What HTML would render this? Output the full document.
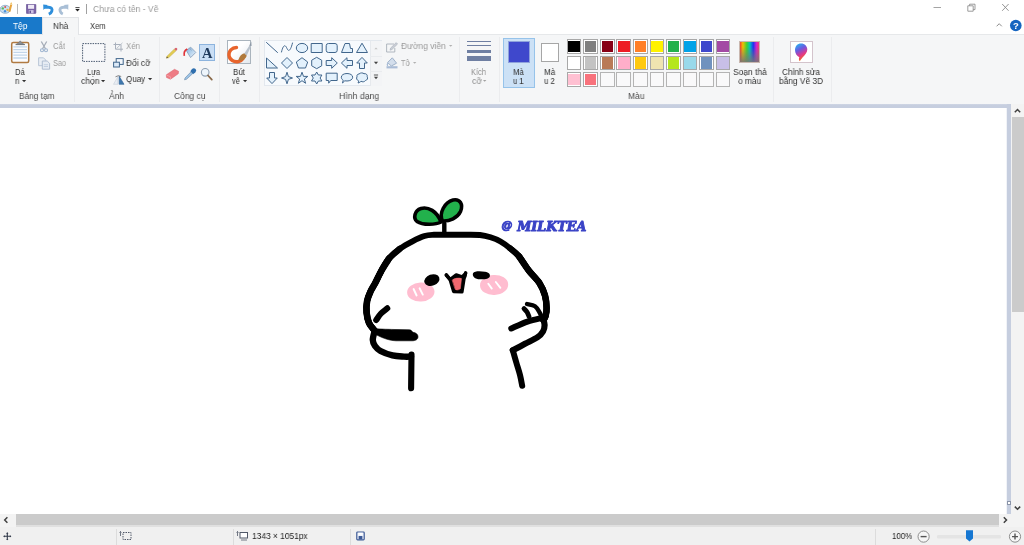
<!DOCTYPE html>
<html lang="vi">
<head>
<meta charset="utf-8">
<title>Chưa có tên - Vẽ</title>
<style>
*{box-sizing:border-box;margin:0;padding:0}
html,body{width:1024px;height:545px;overflow:hidden;background:#fff}
body{font-family:"Liberation Sans",sans-serif;font-size:9px;color:#444;position:relative}
.abs{position:absolute}
svg{overflow:visible;will-change:transform}
.t{position:absolute;white-space:nowrap;line-height:12px;height:12px;transform-origin:0 50%;will-change:transform}
#titlebar{position:absolute;left:0;top:0;width:1024px;height:17px;background:#fff}
#tabs{position:absolute;left:0;top:17px;width:1024px;height:17px;background:#fff}
#ribbon{position:absolute;left:0;top:34px;width:1024px;height:70px;background:#f5f6f7;border-top:1px solid #e6e8ea}
#band{position:absolute;left:0;top:103.8px;width:1011px;height:4.2px;background:linear-gradient(#cfd6e4,#c6cedf 40%)}
#canvas{position:absolute;left:0;top:108px;width:1007px;height:406px;background:#fff}
.sep{position:absolute;top:37px;width:1px;height:65px;background:#ebecee}
.pc{position:absolute;width:14.6px;height:14.6px;border:0.8px solid #a8a8a8;background:#fff}
.pc i{position:absolute;left:0.55px;top:0.55px;right:0.55px;bottom:0.55px;display:block}
.pe{position:absolute;width:14.6px;height:14.6px;border:0.8px solid #b4b4b4;background:#f9f9fa}
</style>
</head>
<body>
<div id="titlebar"></div>
<div id="tabs"></div>
<div id="ribbon"></div>
<div id="band"></div>
<div id="canvas"></div>

<!-- quick access toolbar -->
<svg class="abs" style="left:0;top:1px" width="14" height="14" viewBox="0 0 14 14">
<ellipse cx="5.2" cy="8.3" rx="5.2" ry="4" fill="#c9dff2" stroke="#8aa6c4" stroke-width="0.8"/>
<circle cx="2.8" cy="7.4" r="1.2" fill="#5cb85c"/><circle cx="5" cy="10.3" r="1.2" fill="#4a90d9"/><circle cx="7.4" cy="8.8" r="1.1" fill="#e8b23c"/><circle cx="5.2" cy="6" r="1" fill="#d9534f"/>
<path d="M8.3 10.500 L10.200 3.500 L12.200 4 L10.300 11 Z" fill="#e8a33c"/><path d="M10 3.200 L11.200 1 L12.500 3.800 Z" fill="#f0c060"/>
</svg>
<div class="abs" style="left:17px;top:4px;width:1px;height:10px;background:#b8b8b8"></div>
<svg class="abs" style="left:25.600px;top:4.200px" width="10.200" height="9.700" viewBox="0 0 11 10.500">
<rect x="0.300" y="0.300" width="10.400" height="9.900" rx="0.600" fill="#7a62a6" stroke="#5e4a8c" stroke-width="0.600"/>
<rect x="2.200" y="0.900" width="6.600" height="4.300" fill="#efeaf6"/>
<rect x="3" y="6.600" width="5.200" height="3.600" fill="#cfc4e4"/><rect x="3.800" y="7.200" width="1.500" height="2.600" fill="#5e4a8c"/>
</svg>
<svg class="abs" style="left:43px;top:3.500px" width="11" height="11" viewBox="0 0 11 11">
<path d="M1 3.200 H5.500 C8.500 3.200 9.600 5.200 8.800 7.200 C8.300 8.600 7.200 9.600 5.800 10.200" fill="none" stroke="#2f8fdb" stroke-width="2.900"/>
<path d="M0.200 0.500 L4.800 0.900 L0.400 5.900 Z" fill="#2f8fdb"/>
</svg>
<svg class="abs" style="left:57.800px;top:3.500px" width="11" height="11" viewBox="0 0 11 11">
<path d="M9.500 3.200 H5.500 C2.500 3.200 1.400 5.200 2.200 7.200 C2.700 8.600 3.500 9.400 4.800 10" fill="none" stroke="#a9bfd6" stroke-width="2.900"/>
<path d="M10.400 0.500 L5.800 0.900 L10.200 5.900 Z" fill="#a9bfd6"/>
</svg>
<svg class="abs" style="left:75px;top:6.800px" width="5" height="5.200" viewBox="0 0 6 6"><path d="M0.500 0.600 H5.500" stroke="#222" stroke-width="1"/><path d="M0.300 2.400 H5.700 L3 5.300 Z" fill="#222"/></svg>
<div class="abs" style="left:86px;top:4px;width:1px;height:10px;background:#a0a0a0"></div>
<!-- window buttons -->
<svg class="abs" style="left:928px;top:0" width="96" height="17" viewBox="0 0 96 17">
<path d="M5.500 7.500 H13" stroke="#9a9a9a" stroke-width="0.900" fill="none"/>
<path d="M39.800 5.800 H45.200 V11.200 H39.800 Z M41.600 5.800 V4.200 H47 V9.600 H45.200" stroke="#8a8a8a" stroke-width="0.850" fill="none"/>
<path d="M74.200 4 L80.600 10.800 M80.600 4 L74.200 10.800" stroke="#8a8a8a" stroke-width="0.900" fill="none"/>
</svg>
<svg class="abs" style="left:994px;top:18px" width="30" height="15" viewBox="0 0 30 15">
<path d="M2.600 8.300 L5.200 5.700 L7.800 8.300" stroke="#8a8a8a" stroke-width="1" fill="none"/>
<circle cx="21.800" cy="7.500" r="5.800" fill="#1565c0"/>
<text x="21.800" y="10.800" font-family="'Liberation Sans',sans-serif" font-weight="bold" font-size="9.500" fill="#fff" text-anchor="middle">?</text>
</svg>
<!-- tabs -->
<div class="abs" style="left:0;top:17px;width:42px;height:17px;background:#1979ca"></div>
<div class="abs" style="left:42px;top:17px;width:37px;height:18px;background:#f5f6f7;border:1px solid #e2e4e7;border-bottom:none"></div>

<!-- group separators -->
<div class="sep" style="left:74px"></div>
<div class="sep" style="left:159px"></div>
<div class="sep" style="left:219px"></div>
<div class="sep" style="left:259px"></div>
<div class="sep" style="left:459px"></div>
<div class="sep" style="left:499px"></div>
<div class="sep" style="left:773px"></div>
<div class="sep" style="left:831px"></div>
<!-- paste -->
<svg class="abs" style="left:10px;top:39px" width="21" height="25" viewBox="0 0 21 25">
<rect x="1.700" y="3.400" width="17" height="20.200" rx="1.500" fill="#fbfcfe" stroke="#b07a42" stroke-width="1.500"/>
<path d="M3.400 7.800 H17 M3.400 10.600 H17 M3.400 13.400 H17 M3.400 16.200 H17 M3.400 19 H17" stroke="#c3d6ea" stroke-width="1.300"/>
<path d="M6 5.400 L8.500 3.800 L10.200 1.800 L11.900 3.800 L14.400 5.400 Z" fill="#8a8f96" stroke="#6a7078" stroke-width="0.500"/>
<path d="M5.500 5.600 H15" stroke="#6a7078" stroke-width="0.900"/>
</svg>
<!-- cut -->
<svg class="abs" style="left:40px;top:40.500px" width="8" height="12" viewBox="0 0 8 12">
<path d="M1.300 0.500 L5.600 8 M6.700 0.500 L2.400 8" stroke="#a6adb8" stroke-width="1.300" fill="none"/>
<circle cx="2" cy="9.200" r="1.500" fill="none" stroke="#9fb5d0" stroke-width="1.100"/><circle cx="6" cy="9.200" r="1.500" fill="none" stroke="#9fb5d0" stroke-width="1.100"/>
</svg>
<!-- copy -->
<svg class="abs" style="left:38px;top:56.500px" width="13" height="13" viewBox="0 0 13 13">
<path d="M0.600 0.800 H5.500 L7.800 3.100 V8.700 H0.600 Z" fill="#e9eef5" stroke="#b4c2d4" stroke-width="0.900"/>
<path d="M4.300 4 H9.200 L11.600 6.400 V12.200 H4.300 Z" fill="#e6ecf4" stroke="#a9b9cd" stroke-width="0.900"/>
<path d="M5.800 7.700 H10 M5.800 9.500 H10" stroke="#b9c8da" stroke-width="0.800"/>
</svg>
<!-- select -->
<svg class="abs" style="left:82px;top:43px" width="24" height="19" viewBox="0 0 24 19">
<rect x="0.600" y="0.600" width="22.300" height="17.800" fill="#f7f8fa" stroke="#4a5a70" stroke-width="1" stroke-dasharray="1.500 1"/>
</svg>
<!-- crop -->
<svg class="abs" style="left:113px;top:41.500px" width="11" height="10" viewBox="0 0 11 10">
<path d="M2.500 0.500 V7.200 H10 M0.500 2.500 H8 V9.500" stroke="#a8b0bc" stroke-width="1" fill="none"/><path d="M3.500 6.500 L9.500 0.800" stroke="#b8bec8" stroke-width="0.900"/>
</svg>
<!-- resize -->
<svg class="abs" style="left:113px;top:58px" width="11" height="10" viewBox="0 0 11 10">
<rect x="3.200" y="0.600" width="7" height="5.800" fill="#f4f8fc" stroke="#41668c" stroke-width="1"/>
<rect x="0.600" y="4.200" width="5.800" height="4.800" fill="#dceaf8" stroke="#41668c" stroke-width="1"/>
</svg>
<!-- rotate -->
<svg class="abs" style="left:112.500px;top:74.500px" width="12" height="10" viewBox="0 0 12 10">
<path d="M0.500 9.300 L4.800 1.800 V9.300 Z" fill="#e9eef4" stroke="#c5ccd6" stroke-width="0.600"/>
<path d="M6.200 9.300 V1.200 L11 9.300 Z" fill="#3f77ad" stroke="#2c5f94" stroke-width="0.600"/>
<path d="M2.500 1.800 Q5.500 -0.300 8.200 1.500" stroke="#555" stroke-width="0.700" fill="none"/>
</svg>
<!-- tools -->
<div class="abs" style="left:199.200px;top:44px;width:16px;height:16.500px;background:#c9def5;border:1px solid #8db4de"></div>
<svg class="abs" style="left:160px;top:36px" width="60" height="50" viewBox="160 36 60 50">
<!-- pencil -->
<path d="M166.400 58.200 L167 56.200 L174.300 49 L176.100 50.800 L168.600 57.800 Z" fill="#e2cc52" stroke="#b8a040" stroke-width="0.400"/>
<path d="M174.300 49 L175.300 48 Q176.200 47.400 177 48.200 Q177.700 49 177.100 49.800 L176.100 50.800 Z" fill="#d8606e"/>
<path d="M166.300 58.300 L166.900 56.400 L168.300 57.800 Z" fill="#5a5048"/>
<!-- fill -->
<defs><linearGradient id="bk" x1="0" y1="0" x2="1" y2="1"><stop offset="0" stop-color="#7fb2e0"/><stop offset="1" stop-color="#eef4fa"/></linearGradient></defs>
<path d="M186.300 50.500 L190.700 47.200 L195.800 52.400 L190.600 57.600 Z" fill="url(#bk)" stroke="#8ba3bd" stroke-width="0.900"/>
<path d="M184.300 55.800 Q183.300 51 187.300 49" stroke="#e0343a" stroke-width="1.700" fill="none"/>
<path d="M189.300 47.800 L191.500 50.500" stroke="#8ba3bd" stroke-width="0.800"/>
<!-- eraser -->
<path d="M166.300 74.800 L174.500 69.300 L178.600 71.300 L178.300 73.700 L170.500 79.200 L166.500 77.500 Z" fill="#ee7c85" stroke="#d9626c" stroke-width="0.500"/>
<path d="M166.400 75 L170.500 76.800 L170.500 79.200" fill="none" stroke="#f6aab0" stroke-width="0.700"/>
<!-- picker -->
<path d="M192 69 Q193.800 67.300 195.600 69 Q197 70.800 195.300 72.500 L193 74.300 L190.300 71.300 Z" fill="#2f6fae"/>
<path d="M190.800 72 L192.500 73.800 L186.500 79.300 L184.500 79.800 L185 78 Z" fill="#9cc3e6" stroke="#56789a" stroke-width="0.500"/>
<!-- magnifier -->
<circle cx="205.200" cy="72.300" r="3.800" fill="#eef5fb" stroke="#8d9fb2" stroke-width="1.100"/>
<path d="M208 75.500 L211.800 79.600" stroke="#8a6a4a" stroke-width="1.800" stroke-linecap="round"/>
</svg>
<svg class="abs" style="left:199px;top:44px" width="17" height="17" viewBox="0 0 17 17"><text x="8.300" y="13.800" text-anchor="middle" font-family="'Liberation Serif',serif" font-weight="bold" font-size="14.500" fill="#1f3a5c">A</text></svg>
<!-- brushes -->
<div class="abs" style="left:227px;top:40px;width:24.200px;height:24.200px;background:linear-gradient(135deg,#fff 40%,#e4e9ee);border:1px solid #aab4bd"></div>
<svg class="abs" style="left:227px;top:40px" width="25" height="25" viewBox="0 0 25 25">
<path d="M9.500 7.500 C5 7.500 1.500 11 2 15.500 C2.600 20 7 22.500 11.500 21.500 C13.500 21 15 20 16 18.500" fill="none" stroke="#e8642c" stroke-width="3.400" stroke-linecap="round"/>
<path d="M11.500 20.500 C12 16.500 14.500 13.800 17.800 13.200 L19.800 15.800 C18.500 19 15.500 21.300 11.500 20.500 Z" fill="#b07a3c"/>
<path d="M17.300 13.400 L22.800 5 L24 6.200 L19.800 15.500 Z" fill="#b9c2cc"/>
<path d="M22.300 5.600 L24.300 1.500 L24.600 6" fill="#8c98a6"/>
</svg>
<!-- shapes gallery -->
<div class="abs" style="left:264px;top:40px;width:118px;height:46px;background:#f7fafd;border:1px solid #e3e8ee"></div>
<div class="abs" style="left:370px;top:40.500px;width:11.500px;height:45px;background:#f3f4f6;border-left:1px solid #e6e9ed"></div>
<div class="abs" style="left:370px;top:55.500px;width:11.500px;height:1px;background:#e9ebee"></div>
<div class="abs" style="left:370px;top:70.500px;width:11.500px;height:1px;background:#e9ebee"></div>
<svg class="abs" style="left:0;top:0" width="400" height="104" viewBox="0 0 400 104">
<g transform="translate(272.0 48.0)"><path d="M-5.500 -5.500 L5.500 4.500" stroke="#41668c" stroke-width="1" fill="none" stroke-linecap="round"/></g>
<g transform="translate(287.0 48.0)"><path d="M-5.500 4 C-3.500 -4.500 -1.500 -3 0 0.500 C1.500 4 3.500 3 5.500 -5" stroke="#41668c" stroke-width="1" fill="none" stroke-linecap="round"/></g>
<g transform="translate(302.0 48.0)"><ellipse cx="0" cy="0" rx="5.700" ry="4.600" stroke="#41668c" stroke-width="1" fill="#e3f1fc" stroke-linejoin="round"/></g>
<g transform="translate(316.7 48.0)"><rect x="-5.500" y="-4.500" width="11" height="9" stroke="#41668c" stroke-width="1" fill="#e3f1fc" stroke-linejoin="round"/></g>
<g transform="translate(331.7 48.0)"><rect x="-5.500" y="-4.500" width="11" height="9" rx="2.200" stroke="#41668c" stroke-width="1" fill="#e3f1fc" stroke-linejoin="round"/></g>
<g transform="translate(347.0 48.0)"><path d="M-5.500 4.500 L-2 -4.500 H2.500 L3.500 0.500 H5.500 V4.500 Z" stroke="#41668c" stroke-width="1" fill="#e3f1fc" stroke-linejoin="round"/></g>
<g transform="translate(362.0 48.0)"><path d="M0 -4.800 L5.500 4.500 H-5.500 Z" stroke="#41668c" stroke-width="1" fill="#e3f1fc" stroke-linejoin="round"/></g>
<g transform="translate(272.0 63.0)"><path d="M-5.500 -5 L5.500 5 H-5.500 Z" stroke="#41668c" stroke-width="1" fill="#e3f1fc" stroke-linejoin="round"/></g>
<g transform="translate(287.0 63.0)"><path d="M0 -5.500 L5.500 0 L0 5.500 L-5.500 0 Z" stroke="#41668c" stroke-width="1" fill="#e3f1fc" stroke-linejoin="round"/></g>
<g transform="translate(302.0 63.0)"><path d="M0 -5.300 L5.700 -1 L3.500 5 H-3.500 L-5.700 -1 Z" stroke="#41668c" stroke-width="1" fill="#e3f1fc" stroke-linejoin="round"/></g>
<g transform="translate(316.7 63.0)"><path d="M0 -5.700 L5 -2.800 V2.800 L0 5.700 L-5 2.800 V-2.800 Z" stroke="#41668c" stroke-width="1" fill="#e3f1fc" stroke-linejoin="round"/></g>
<g transform="translate(331.7 63.0)"><path d="M-5.500 -2.500 H0 V-5.300 L5.600 0 L0 5.300 V2.500 H-5.500 Z" stroke="#41668c" stroke-width="1" fill="#e3f1fc" stroke-linejoin="round"/></g>
<g transform="translate(347.0 63.0)"><path d="M5.500 -2.500 H0 V-5.300 L-5.600 0 L0 5.300 V2.500 H5.500 Z" stroke="#41668c" stroke-width="1" fill="#e3f1fc" stroke-linejoin="round"/></g>
<g transform="translate(362.0 63.0)"><path d="M-2.500 5.500 V0 H-5.300 L0 -5.600 L5.300 0 H2.500 V5.500 Z" stroke="#41668c" stroke-width="1" fill="#e3f1fc" stroke-linejoin="round"/></g>
<g transform="translate(272.0 78.0)"><path d="M-2.500 -5.500 V0 H-5.300 L0 5.600 L5.300 0 H2.500 V-5.500 Z" stroke="#41668c" stroke-width="1" fill="#e3f1fc" stroke-linejoin="round"/></g>
<g transform="translate(287.0 78.0)"><path d="M0 -5.800 L1.400 -1.400 L5.500 0 L1.400 1.400 L0 5.800 L-1.400 1.400 L-5.500 0 L-1.400 -1.400 Z" stroke="#41668c" stroke-width="1" fill="#e3f1fc" stroke-linejoin="round"/></g>
<g transform="translate(302.0 78.0)"><path d="M0 -5.800 L1.500 -1.600 L5.800 -1.600 L2.400 1 L3.600 5.300 L0 2.700 L-3.600 5.300 L-2.400 1 L-5.800 -1.600 L-1.500 -1.600 Z" stroke="#41668c" stroke-width="1" fill="#e3f1fc" stroke-linejoin="round"/></g>
<g transform="translate(316.7 78.0)"><path d="M0 -6 L1.700 -3 L5.200 -3 L3.400 0 L5.200 3 L1.700 3 L0 6 L-1.700 3 L-5.200 3 L-3.400 0 L-5.200 -3 L-1.700 -3 Z" stroke="#41668c" stroke-width="1" fill="#e3f1fc" stroke-linejoin="round"/></g>
<g transform="translate(331.7 78.0)"><path d="M-5.500 -4.800 H5.500 V2.500 H-1 L-3 5.200 V2.500 H-5.500 Z" stroke="#41668c" stroke-width="1" fill="#e3f1fc" stroke-linejoin="round" /></g>
<g transform="translate(347.0 78.0)"><path d="M0 -4.500 C3.200 -4.500 5.700 -3 5.700 -0.800 C5.700 1.500 3.200 3 0 3 C-0.800 3 -1.500 2.900 -2.200 2.800 L-4.500 5 L-3.800 2.200 C-5 1.400 -5.700 0.400 -5.700 -0.800 C-5.700 -3 -3.200 -4.500 0 -4.500 Z" stroke="#41668c" stroke-width="1" fill="#e3f1fc" stroke-linejoin="round"/></g>
<g transform="translate(362.0 78.0)"><path d="M-3 -4 C-1.500 -5.500 1 -5.300 2 -4.300 C4 -4.800 5.700 -3.200 5.200 -1.300 C6.200 0.200 5.200 2.200 3.500 2.500 C2.500 4 0.200 4.200 -1 3.200 C-1.500 3.700 -2.500 4.700 -4 5 C-3.500 4.200 -3.300 3.500 -3.400 2.800 C-5.200 2.200 -6 0.300 -5 -1.200 C-5.500 -2.800 -4.500 -4 -3 -4 Z" stroke="#41668c" stroke-width="1" fill="#e3f1fc" stroke-linejoin="round"/></g>
</svg>
<svg class="abs" style="left:370px;top:40px" width="12" height="46" viewBox="0 0 12 46">
<path d="M4.300 9.300 H7.700 L6 7.500 Z" fill="#c4c4c4"/>
<path d="M3.900 21.800 H8.100 L6 24.200 Z" fill="#444"/>
<path d="M3.900 35 H8.100" stroke="#444" stroke-width="0.900"/><path d="M3.900 36.800 H8.100 L6 39.200 Z" fill="#444"/>
</svg>
<!-- outline / fill -->
<svg class="abs" style="left:386px;top:42px" width="12" height="11" viewBox="0 0 12 11">
<path d="M0.600 2 H8 M0.600 2 V10 H8.800 V6" stroke="#a9b0b9" stroke-width="0.900" fill="none"/>
<path d="M4 8.200 L4.600 6 L10.200 0.600 L11.600 2 L6 7.500 Z" fill="#c9ced6" stroke="#a0a6b0" stroke-width="0.500"/>
</svg>
<svg class="abs" style="left:386px;top:57px" width="12" height="12" viewBox="0 0 12 12">
<path d="M0.500 11.400 H11.500 V9.200 H0.500 Z" fill="#a9bcd6"/>
<path d="M6.300 0.800 L10.600 6.200 L5.300 9 L1.600 5.500 Z" fill="#d3deec" stroke="#9db0c8" stroke-width="1"/>
<path d="M2 6 Q0.800 7.500 1.600 9" stroke="#a9bcd6" stroke-width="1.300" fill="none"/>
</svg>
<!-- size -->
<div class="abs" style="left:467px;top:41.200px;width:24px;height:0.900px;background:#6f7fa2"></div>
<div class="abs" style="left:467px;top:44.700px;width:24px;height:1.500px;background:#6f7fa2"></div>
<div class="abs" style="left:467px;top:50px;width:24px;height:2.900px;background:#6f7fa2"></div>
<div class="abs" style="left:467px;top:56.200px;width:24px;height:5.200px;background:#6f7fa2"></div>
<!-- color 1 / 2 -->
<div class="abs" style="left:503.300px;top:38.300px;width:31.300px;height:49.300px;background:#cce1f6;border:1px solid #96c3ea"></div>
<div class="abs" style="left:507.600px;top:41.200px;width:22px;height:22px;background:#3f48cc;border:1px solid #8fa2dc"></div>
<div class="abs" style="left:541px;top:43.200px;width:18.300px;height:18.500px;background:#fff;border:1px solid #a6a6a6"></div>
<div class="pc" style="left:566.90px;top:39.10px"><i style="background:#000000"></i></div>
<div class="pc" style="left:583.43px;top:39.10px"><i style="background:#7f7f7f"></i></div>
<div class="pc" style="left:599.96px;top:39.10px"><i style="background:#880015"></i></div>
<div class="pc" style="left:616.49px;top:39.10px"><i style="background:#ed1c24"></i></div>
<div class="pc" style="left:633.02px;top:39.10px"><i style="background:#ff7f27"></i></div>
<div class="pc" style="left:649.55px;top:39.10px"><i style="background:#fff200"></i></div>
<div class="pc" style="left:666.08px;top:39.10px"><i style="background:#22b14c"></i></div>
<div class="pc" style="left:682.61px;top:39.10px"><i style="background:#00a2e8"></i></div>
<div class="pc" style="left:699.14px;top:39.10px"><i style="background:#3f48cc"></i></div>
<div class="pc" style="left:715.67px;top:39.10px"><i style="background:#a349a4"></i></div>
<div class="pc" style="left:566.90px;top:55.50px"><i style="background:#ffffff"></i></div>
<div class="pc" style="left:583.43px;top:55.50px"><i style="background:#c3c3c3"></i></div>
<div class="pc" style="left:599.96px;top:55.50px"><i style="background:#b97a57"></i></div>
<div class="pc" style="left:616.49px;top:55.50px"><i style="background:#ffaec9"></i></div>
<div class="pc" style="left:633.02px;top:55.50px"><i style="background:#ffc90e"></i></div>
<div class="pc" style="left:649.55px;top:55.50px"><i style="background:#efe4b0"></i></div>
<div class="pc" style="left:666.08px;top:55.50px"><i style="background:#b5e61d"></i></div>
<div class="pc" style="left:682.61px;top:55.50px"><i style="background:#99d9ea"></i></div>
<div class="pc" style="left:699.14px;top:55.50px"><i style="background:#7092be"></i></div>
<div class="pc" style="left:715.67px;top:55.50px"><i style="background:#c8bfe7"></i></div>
<div class="pc" style="left:566.90px;top:72.10px"><i style="background:#ffc0d2"></i></div>
<div class="pc" style="left:583.43px;top:72.10px"><i style="background:#f8727c"></i></div>
<div class="pe" style="left:599.96px;top:72.10px"></div>
<div class="pe" style="left:616.49px;top:72.10px"></div>
<div class="pe" style="left:633.02px;top:72.10px"></div>
<div class="pe" style="left:649.55px;top:72.10px"></div>
<div class="pe" style="left:666.08px;top:72.10px"></div>
<div class="pe" style="left:682.61px;top:72.10px"></div>
<div class="pe" style="left:699.14px;top:72.10px"></div>
<div class="pe" style="left:715.67px;top:72.10px"></div>
<!-- edit colors -->
<div class="abs" style="left:738.800px;top:41.200px;width:21.400px;height:21.400px;border:1px solid #c9b8b0;background:#fff"></div>
<div class="abs" style="left:739.900px;top:42.300px;width:19.300px;height:19.300px;background:linear-gradient(rgba(128,128,128,0) 25%,rgba(118,118,118,0.9)),linear-gradient(90deg,#f04030,#f0c000 15%,#40d030 36%,#00c0c0 52%,#2030f0 70%,#d020d0 86%,#f04070)"></div>
<!-- paint 3d -->
<div class="abs" style="left:790.200px;top:41.200px;width:22.400px;height:22.200px;border:1px solid #d4c4cc;background:#fff"></div>
<svg class="abs" style="left:790px;top:41px" width="23" height="23" viewBox="0 0 23 23">
<defs><linearGradient id="p3d" x1="0.200" y1="0" x2="0.600" y2="1"><stop offset="0" stop-color="#28b4f0"/><stop offset="0.350" stop-color="#6a5ae0"/><stop offset="0.650" stop-color="#e0388c"/><stop offset="0.850" stop-color="#f05a3c"/><stop offset="1" stop-color="#f8c030"/></linearGradient></defs>
<path d="M11 2.500 C14.800 2.500 17.300 5.200 17.300 8.500 C17.300 11.800 14.800 14 12.500 16.500 C11.300 17.800 10.500 19 9.800 20.300 C8.800 19.300 8.600 17.800 9.300 16.200 C6.800 15 5 12.300 5 9 C5 5.200 7.500 2.500 11 2.500 Z" fill="url(#p3d)"/>
</svg>
<svg class="abs" style="left:21.70px;top:80.05px" width="4.2" height="2.3" viewBox="0 0 4.2 2.3"><path d="M0 0 H4.2 L2.10 2.3 Z" fill="#333"/></svg>
<svg class="abs" style="left:101.40px;top:80.05px" width="4.2" height="2.3" viewBox="0 0 4.2 2.3"><path d="M0 0 H4.2 L2.10 2.3 Z" fill="#333"/></svg>
<svg class="abs" style="left:148.20px;top:78.45px" width="4.2" height="2.3" viewBox="0 0 4.2 2.3"><path d="M0 0 H4.2 L2.10 2.3 Z" fill="#333"/></svg>
<svg class="abs" style="left:242.50px;top:80.05px" width="4.2" height="2.3" viewBox="0 0 4.2 2.3"><path d="M0 0 H4.2 L2.10 2.3 Z" fill="#333"/></svg>
<svg class="abs" style="left:448.80px;top:45.30px" width="3.4" height="1.8" viewBox="0 0 3.4 1.8"><path d="M0 0 H3.4 L1.70 1.8 Z" fill="#b0b0b0"/></svg>
<svg class="abs" style="left:412.60px;top:61.90px" width="3.4" height="1.8" viewBox="0 0 3.4 1.8"><path d="M0 0 H3.4 L1.70 1.8 Z" fill="#b0b0b0"/></svg>
<svg class="abs" style="left:482.60px;top:80.30px" width="3.4" height="1.8" viewBox="0 0 3.4 1.8"><path d="M0 0 H3.4 L1.70 1.8 Z" fill="#a0a0a0"/></svg><svg class="abs" id="drawing" style="left:0;top:108px" width="1007" height="406" viewBox="0 108 1007 406">
<g fill="none" stroke="#000" stroke-linecap="round" stroke-linejoin="round">
<ellipse cx="420.8" cy="292" rx="13.7" ry="9.6" fill="#ffbdd0" stroke="none" transform="rotate(-3 420.8 292)"/>
<ellipse cx="494.1" cy="284.9" rx="14.1" ry="10" fill="#ffbdd0" stroke="none" transform="rotate(-3 494.1 284.9)"/>
<path d="M413.6 289 L416.6 295.5 M419.6 288.3 L422.8 294.6" stroke="#fff" stroke-width="1.9"/>
<path d="M488.3 283.8 L491.8 288.6 M495.8 282 L500.4 287.8" stroke="#fff" stroke-width="1.9"/>
<path d="M374.50 330.50 C373.58 329.25 370.32 326.00 369.00 323.00 C367.68 320.00 366.92 316.17 366.60 312.50 C366.28 308.83 366.45 304.50 367.10 301.00 C367.75 297.50 369.14 294.50 370.50 291.50 C371.86 288.50 373.37 286.58 375.25 283.00 C377.13 279.42 379.48 274.12 381.80 270.00 C384.12 265.88 386.17 261.85 389.20 258.30 C392.23 254.75 396.12 251.53 400.00 248.70 C403.88 245.87 408.42 243.42 412.50 241.30 C416.58 239.18 420.92 237.08 424.50 236.00 C428.08 234.92 429.75 235.02 434.00 234.80 C438.25 234.58 444.67 234.72 450.00 234.70 C455.33 234.68 461.00 234.65 466.00 234.70 C471.00 234.75 475.92 234.57 480.00 235.00 C484.08 235.43 487.08 236.22 490.50 237.30 C493.92 238.38 497.25 239.68 500.50 241.50 C503.75 243.32 506.92 245.73 510.00 248.20 C513.08 250.67 515.88 252.58 519.00 256.30 C522.12 260.02 525.35 266.05 528.75 270.50 C532.15 274.95 536.69 278.83 539.40 283.00 C542.11 287.17 543.80 291.33 545.00 295.50 C546.20 299.67 546.50 304.58 546.60 308.00 C546.70 311.42 546.12 314.00 545.60 316.00 C545.08 318.00 543.85 319.33 543.50 320.00" stroke-width="5.90" />
<path d="M374.50 330.50 C373.58 329.25 370.32 326.00 369.00 323.00 C367.68 320.00 366.92 316.17 366.60 312.50 C366.28 308.83 366.45 304.50 367.10 301.00 C367.75 297.50 369.14 294.50 370.50 291.50 C371.86 288.50 373.37 286.58 375.25 283.00 C377.13 279.42 379.48 274.12 381.80 270.00 C384.12 265.88 387.97 260.25 389.20 258.30" stroke-width="6.60" />
<path d="M374.50 330.50 C373.58 329.25 370.32 326.00 369.00 323.00 C367.68 320.00 366.92 316.17 366.60 312.50 C366.28 308.83 366.45 304.50 367.10 301.00 C367.75 297.50 369.14 294.50 370.50 291.50 C371.86 288.50 373.37 286.58 375.25 283.00 C377.13 279.42 379.48 274.12 381.80 270.00 C384.12 265.88 386.17 261.85 389.20 258.30 C392.23 254.75 398.20 250.30 400.00 248.70" stroke-width="6.25" />
<path d="M519.00 256.30 C520.62 258.67 525.35 266.05 528.75 270.50 C532.15 274.95 536.69 278.83 539.40 283.00 C542.11 287.17 543.80 291.33 545.00 295.50 C546.20 299.67 546.50 304.58 546.60 308.00 C546.70 311.42 546.12 314.00 545.60 316.00 C545.08 318.00 543.85 319.33 543.50 320.00" stroke-width="6.50" />
<path d="M510.00 248.20 C511.50 249.55 515.88 252.58 519.00 256.30 C522.12 260.02 525.35 266.05 528.75 270.50 C532.15 274.95 536.69 278.83 539.40 283.00 C542.11 287.17 543.80 291.33 545.00 295.50 C546.20 299.67 546.50 304.58 546.60 308.00 C546.70 311.42 546.12 314.00 545.60 316.00 C545.08 318.00 543.85 319.33 543.50 320.00" stroke-width="6.20" />
<path d="M374 328.5 C380 329.3 390 329.3 398 329.6 L409.5 329.8 C411.5 330 412 331.5 413 332.3 C416 332.6 418 334.5 418 336.8 C418 339.5 415.500 340.800 412 340.800 L396 340.800 C388 340.500 380 337 374 333.500 Z" fill="#000" stroke="#000" stroke-width="0.6"/>
<path d="M374.50 331.50 C374.22 332.92 372.72 337.58 372.80 340.00 C372.88 342.42 373.72 344.17 375.00 346.00 C376.28 347.83 377.58 349.43 380.50 351.00 C383.42 352.57 388.58 354.47 392.50 355.40 C396.42 356.33 400.92 356.40 404.00 356.60 C407.08 356.80 409.83 356.60 411.00 356.60" stroke-width="6.40" />
<path d="M411.500 354.500 L411.100 388.300" stroke-width="6.100"/>
<path d="M387.30 308.30 C386.25 309.17 382.85 311.55 381.00 313.50 C379.15 315.45 377.00 318.92 376.20 320.00" stroke-width="6.00" />
<path d="M511.30 328.50 C514.00 327.35 522.22 323.42 527.50 321.60 C532.78 319.78 540.42 318.27 543.00 317.60" stroke-width="6.00" />
<path d="M543.00 318.00 C543.27 319.17 544.60 322.75 544.60 325.00 C544.60 327.25 544.18 329.45 543.00 331.50 C541.82 333.55 540.50 335.25 537.50 337.30 C534.50 339.35 529.12 341.63 525.00 343.80 C520.88 345.97 514.83 349.22 512.80 350.30" stroke-width="6.20" />
<path d="M512.80 350.30 C513.38 352.33 515.10 358.38 516.30 362.50 C517.50 366.62 519.02 371.12 520.00 375.00 C520.98 378.88 521.83 384.00 522.20 385.80" stroke-width="6.00" stroke-linejoin="miter"/>
<path d="M527.00 304.00 C528.33 304.38 532.90 304.88 535.00 306.30 C537.10 307.72 538.52 310.72 539.60 312.50 C540.68 314.28 541.18 316.25 541.50 317.00" stroke-width="4.40" />
<path d="M524.00 308.60 C524.50 309.17 526.17 310.68 527.00 312.00 C527.83 313.32 528.67 315.75 529.00 316.50" stroke-width="4.80" />
<path d="M444.300 223.500 L444.300 232.500" stroke-width="4.400"/>
<path d="M441 222 C436 224.800 423 225.500 417 221.500 C413 218 414.500 210.500 421 208.500 C428 206.500 437 211 441 222 Z" fill="#22b14c" stroke-width="3.600"/>
<path d="M442.500 221 C438.500 213 445 202 453 200 C460 198.500 463.500 204.500 460.500 211.500 C457.500 218 449.500 221.500 442.500 221 Z" fill="#22b14c" stroke-width="3.600"/>
<ellipse cx="431.900" cy="280.100" rx="7.800" ry="5.600" fill="#000" stroke="none" transform="rotate(-20 431.900 280.100)"/>
<path d="M473 273.200 C474.500 270.800 480 270.900 485 271.700 C489 272.300 490.500 274.500 489.800 276.500 C489 279 485 279.500 480 279.300 C475 279 472 276.500 473 273.200 Z" fill="#000" stroke="none"/>
<path d="M446.300 275 L450 279.500 L456.200 274.800 L462 276.800 L465.600 273.300 L464.200 278 L462 292 L453.600 291.600 L450 279.500 Z" fill="#000" stroke="#000" stroke-width="3.200"/>
<path d="M446.300 275 L450 279.300" stroke-width="3.600"/>
<path d="M465.700 272.800 L464.600 277" stroke-width="3.400"/>
<path d="M452.400 280 C454 278.200 459 277.600 461.500 278.600 L460.300 288.800 C458.500 290.200 456.500 290.200 455.400 289.400 Z" fill="#f2686f" stroke="#f2686f" stroke-width="0.600"/>
</g>
<text id="milk" y="230.800" font-family="'DejaVu Serif','Liberation Serif',serif" font-weight="bold" font-style="italic" font-size="13.700" fill="#3a43c6" stroke="#3a43c6" stroke-width="1" stroke-linejoin="round"><tspan x="501.500" y="229" font-size="11.800" textLength="10.800" lengthAdjust="spacingAndGlyphs">@</tspan><tspan x="517.300" y="230.600" textLength="69" lengthAdjust="spacingAndGlyphs">MILKTEA</tspan></text>
</svg>

<!-- work area right strip + scrollbars -->
<div class="abs" style="left:1007.2px;top:104px;width:3.700px;height:410px;background:#c6cedf"></div>
<div class="abs" style="left:1005.500px;top:108px;width:1.700px;height:406px;background:linear-gradient(90deg,#fff,#e3e7f0)"></div>
<div class="abs" style="left:1007px;top:501px;width:4px;height:4px;background:#fff;border:1px solid #8a94a8"></div>
<div class="abs" style="left:1011px;top:104px;width:13px;height:410px;background:#f3f3f3"></div>
<div class="abs" style="left:1011.500px;top:116.800px;width:12.500px;height:195px;background:#cbcbcb"></div>
<svg class="abs" style="left:1011px;top:104px" width="13" height="13" viewBox="0 0 13 13"><path d="M3.800 8.200 L6.500 5.500 L9.200 8.200" fill="none" stroke="#404040" stroke-width="1.500"/></svg>
<svg class="abs" style="left:1011px;top:501.500px" width="13" height="13" viewBox="0 0 13 13"><path d="M3.800 4.600 L6.500 7.300 L9.200 4.600" fill="none" stroke="#404040" stroke-width="1.500"/></svg>
<div class="abs" style="left:0;top:513.800px;width:1024px;height:13px;background:#f3f3f3"></div>
<div class="abs" style="left:16px;top:524.800px;width:982.500px;height:1.900px;background:#e0e0e0"></div>
<div class="abs" style="left:16px;top:513.800px;width:982.500px;height:11.100px;background:#cbcbcb"></div>
<svg class="abs" style="left:0;top:514px" width="13" height="12" viewBox="0 0 13 12"><path d="M7.400 3.300 L4.700 6 L7.400 8.700" fill="none" stroke="#404040" stroke-width="1.500"/></svg>
<svg class="abs" style="left:999px;top:514px" width="13" height="12" viewBox="0 0 13 12"><path d="M4.800 3.300 L7.500 6 L4.800 8.700" fill="none" stroke="#404040" stroke-width="1.500"/></svg>

<div class="abs" id="status" style="left:0;top:526.700px;width:1024px;height:18.300px;background:#f0f0f0"></div>
<div class="abs" style="left:116px;top:529px;width:1px;height:16px;background:#dcdcdc"></div>
<div class="abs" style="left:233px;top:529px;width:1px;height:16px;background:#dcdcdc"></div>
<div class="abs" style="left:350px;top:529px;width:1px;height:16px;background:#dcdcdc"></div>
<div class="abs" style="left:875px;top:529px;width:1px;height:16px;background:#dcdcdc"></div>
<svg class="abs" style="left:2.800px;top:532.200px" width="8.600" height="8.600" viewBox="0 0 11 11"><path d="M5.500 1 V10 M1 5.500 H10" stroke="#303848" stroke-width="1.400" fill="none"/><path d="M5.500 0.300 L7 2.200 H4 Z M5.500 10.700 L7 8.800 H4 Z M0.300 5.500 L2.200 4 V7 Z M10.700 5.500 L8.800 4 V7 Z" fill="#303848"/></svg>
<svg class="abs" style="left:119px;top:530px" width="14" height="12" viewBox="0 0 14 12"><path d="M1.500 1.500 V6 M0.500 2.500 L1.500 1.500 L2.500 2.500" stroke="#505868" stroke-width="0.800" fill="none"/><rect x="4" y="2.500" width="8" height="7" fill="none" stroke="#505868" stroke-width="1" stroke-dasharray="1.500 1"/></svg>
<svg class="abs" style="left:236px;top:530px" width="14" height="12" viewBox="0 0 14 12"><path d="M1.500 1.500 V6 M0.500 2.500 L1.500 1.500 L2.500 2.500" stroke="#505868" stroke-width="0.800" fill="none"/><rect x="4" y="2.500" width="7.500" height="5.500" fill="#fff" stroke="#505868" stroke-width="1"/><path d="M5 10 H11" stroke="#505868" stroke-width="0.800"/></svg>
<svg class="abs" style="left:356px;top:531px" width="9" height="10" viewBox="0 0 9 10"><rect x="0.800" y="1" width="7.400" height="7.800" rx="0.800" fill="#eef2fa" stroke="#3c5a96" stroke-width="1.200"/><rect x="2.600" y="5" width="3.800" height="3.400" fill="#3c5a96"/><rect x="2.400" y="1.800" width="4.200" height="1.800" fill="#fff"/></svg>
<svg class="abs" style="left:916px;top:528px" width="108" height="17" viewBox="0 0 108 17"><rect x="21" y="7" width="64" height="3.400" rx="1.200" fill="#e4e4e4"/><circle cx="7.600" cy="8.600" r="5.600" fill="#f6f6f6" stroke="#8c8c8c" stroke-width="1"/><path d="M4.600 8.600 H10.600" stroke="#555" stroke-width="1.400"/><circle cx="99" cy="8.600" r="5.600" fill="#f6f6f6" stroke="#8c8c8c" stroke-width="1"/><path d="M96 8.600 H102 M99 5.600 V11.600" stroke="#555" stroke-width="1.400"/><path d="M50 2.200 H57 V10.400 L53.500 13.600 L50 10.400 Z" fill="#1677d2"/></svg>
<div class="t" id="t0" style="left:92.70px;top:2.67px;font-size:9.60px;color:#9a9a9a;transform:scaleX(0.8961);">Chưa có tên - Vẽ</div>
<div class="t" id="t1" style="left:13.20px;top:20.27px;font-size:9.60px;color:#fff;transform:scaleX(0.8703);">Tệp</div>
<div class="t" id="t2" style="left:52.70px;top:20.07px;font-size:9.60px;color:#333;transform:scaleX(0.8689);">Nhà</div>
<div class="t" id="t3" style="left:90.00px;top:20.07px;font-size:9.60px;color:#333;transform:scaleX(0.7905);">Xem</div>
<div class="t" id="t4" style="left:14.60px;top:65.58px;font-size:9.30px;color:#333;transform:scaleX(0.8242);">Dá</div>
<div class="t" id="t5" style="left:14.60px;top:74.98px;font-size:9.30px;color:#333;transform:scaleX(0.8508);">n</div>
<div class="t" id="t6" style="left:53.00px;top:39.98px;font-size:9.30px;color:#9b9b9b;transform:scaleX(0.8294);">Cắt</div>
<div class="t" id="t7" style="left:53.00px;top:56.78px;font-size:9.30px;color:#9b9b9b;transform:scaleX(0.7856);">Sao</div>
<div class="t" id="t8" style="left:19.00px;top:90.38px;font-size:9.30px;color:#4c4c4c;transform:scaleX(0.8920);">Bảng tạm</div>
<div class="t" id="t9" style="left:86.50px;top:65.58px;font-size:9.30px;color:#333;transform:scaleX(0.7842);">Lựa</div>
<div class="t" id="t10" style="left:81.00px;top:74.98px;font-size:9.30px;color:#333;transform:scaleX(0.9171);">chọn</div>
<div class="t" id="t11" style="left:126.30px;top:39.98px;font-size:9.30px;color:#9b9b9b;transform:scaleX(0.8461);">Xén</div>
<div class="t" id="t12" style="left:126.00px;top:56.58px;font-size:9.30px;color:#333;transform:scaleX(0.8981);">Đổi cỡ</div>
<div class="t" id="t13" style="left:126.30px;top:73.38px;font-size:9.30px;color:#333;transform:scaleX(0.8635);">Quay</div>
<div class="t" id="t14" style="left:109.00px;top:90.38px;font-size:9.30px;color:#4c4c4c;transform:scaleX(0.9065);">Ảnh</div>
<div class="t" id="t15" style="left:173.80px;top:90.38px;font-size:9.30px;color:#4c4c4c;transform:scaleX(0.9093);">Công cụ</div>
<div class="t" id="t16" style="left:233.00px;top:65.58px;font-size:9.30px;color:#333;transform:scaleX(0.8591);">Bút</div>
<div class="t" id="t17" style="left:232.00px;top:74.98px;font-size:9.30px;color:#333;transform:scaleX(0.7936);">vẽ</div>
<div class="t" id="t18" style="left:339.00px;top:90.38px;font-size:9.30px;color:#4c4c4c;transform:scaleX(0.9393);">Hình dạng</div>
<div class="t" id="t19" style="left:400.50px;top:39.98px;font-size:9.30px;color:#9b9b9b;transform:scaleX(0.9140);">Đường viền</div>
<div class="t" id="t20" style="left:400.50px;top:56.58px;font-size:9.30px;color:#9b9b9b;transform:scaleX(0.7827);">Tô</div>
<div class="t" id="t21" style="left:471.00px;top:65.58px;font-size:9.30px;color:#8c8c8c;transform:scaleX(0.8060);">Kích</div>
<div class="t" id="t22" style="left:471.50px;top:74.98px;font-size:9.30px;color:#8c8c8c;transform:scaleX(0.9302);">cỡ</div>
<div class="t" id="t23" style="left:512.80px;top:65.58px;font-size:9.30px;color:#333;transform:scaleX(0.8358);">Mà</div>
<div class="t" id="t24" style="left:513.00px;top:74.98px;font-size:9.30px;color:#333;transform:scaleX(0.8116);">u 1</div>
<div class="t" id="t25" style="left:544.00px;top:65.58px;font-size:9.30px;color:#333;transform:scaleX(0.8745);">Mà</div>
<div class="t" id="t26" style="left:544.20px;top:74.98px;font-size:9.30px;color:#333;transform:scaleX(0.8348);">u 2</div>
<div class="t" id="t27" style="left:628.00px;top:90.38px;font-size:9.30px;color:#4c4c4c;transform:scaleX(0.9064);">Màu</div>
<div class="t" id="t28" style="left:732.60px;top:65.58px;font-size:9.30px;color:#333;transform:scaleX(0.9078);">Soạn thả</div>
<div class="t" id="t29" style="left:738.30px;top:74.98px;font-size:9.30px;color:#333;transform:scaleX(0.8938);">o màu</div>
<div class="t" id="t30" style="left:782.30px;top:65.58px;font-size:9.30px;color:#333;transform:scaleX(0.8853);">Chỉnh sửa</div>
<div class="t" id="t31" style="left:779.40px;top:74.98px;font-size:9.30px;color:#333;transform:scaleX(0.8980);">bằng Vẽ 3D</div>
<div class="t" id="t32" style="left:252.40px;top:529.94px;font-size:9.40px;color:#222;transform:scaleX(0.8923);">1343 × 1051px</div>
<div class="t" id="t33" style="left:892.00px;top:529.94px;font-size:9.40px;color:#222;transform:scaleX(0.8422);">100%</div>
</body>
</html>
